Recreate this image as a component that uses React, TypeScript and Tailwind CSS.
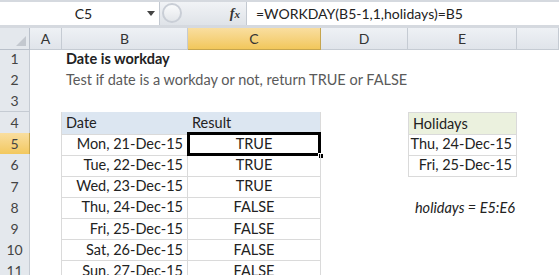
import React from "react";

const FONT = "font-['Lato','Open_Sans',sans-serif]";

// column widths: row header, A, B, C, D, E, F
const COLS = "grid-cols-[30px_32px_126px_133px_87px_109px_1fr]";

type Row = {
  n: number;
  b?: string;
  c?: string;
  e?: string;
};

const rows: Row[] = [
  { n: 1 },
  { n: 2 },
  { n: 3 },
  { n: 4, b: "Date", c: "Result", e: "Holidays" },
  { n: 5, b: "Mon, 21-Dec-15", c: "TRUE", e: "Thu, 24-Dec-15" },
  { n: 6, b: "Tue, 22-Dec-15", c: "TRUE", e: "Fri, 25-Dec-15" },
  { n: 7, b: "Wed, 23-Dec-15", c: "TRUE" },
  { n: 8, b: "Thu, 24-Dec-15", c: "FALSE" },
  { n: 9, b: "Fri, 25-Dec-15", c: "FALSE" },
  { n: 10, b: "Sat, 26-Dec-15", c: "FALSE" },
  { n: 11, b: "Sun, 27-Dec-15", c: "FALSE" },
];

const FormulaBar = () => (
  <div className="h-[28px] bg-[#d5d9df] pt-[2px] pb-[3px] flex">
    <div className="w-[160px] bg-white flex items-center border-r border-[#c3c9d1]">
      <span className="flex-1 text-center text-[14px] text-[#222] pl-[20px]">C5</span>
      <svg width="8" height="5" viewBox="0 0 8 5" className="mr-[4px]">
        <path d="M0 0 L8 0 L4 5 Z" fill="#444" />
      </svg>
    </div>
    <div className="w-[86px] flex items-center bg-gradient-to-b from-[#f1f3f6] to-[#dfe3e8] relative">
      <div className="absolute left-[2px] top-[1px] w-[20px] h-[20px] rounded-full border-2 border-[#c9ced6] bg-gradient-to-b from-[#fafbfc] to-[#e3e6ea]" />
      <span className="ml-auto mr-[6px] font-['Liberation_Serif',serif] italic font-bold text-[14px] text-[#333]">
        f<span className="text-[11px]">x</span>
      </span>
    </div>
    <div className="flex-1 bg-white flex items-center pl-[9px] text-[14px] text-[#222] border-l border-[#c3c9d1]">
      =WORKDAY(B5-1,1,holidays)=B5
    </div>
  </div>
);

const Header = () => (
  <div className={`grid ${COLS} h-[20px] text-[14px] text-[#333]`}>
    <div className="bg-[#e4e8ed] border-r border-b border-[#b9c0ca] relative">
      <svg width="10" height="10" viewBox="0 0 10 10" className="absolute right-[3px] bottom-[3px]">
        <path d="M10 0 L10 10 L0 10 Z" fill="#c3c8cf" />
      </svg>
    </div>
    {["A", "B", "C", "D", "E", ""].map((l) =>
      l === "C" ? (
        <div
          key={l}
          className="flex items-center justify-center bg-gradient-to-b from-[#f9de9f] to-[#f2c75a] border-r border-b border-[#c6a54e]"
        >
          {l}
        </div>
      ) : (
        <div
          key={l || "f"}
          className="flex items-center justify-center bg-gradient-to-b from-[#eef1f5] to-[#e0e4ea] border-r border-b border-[#c5cbd3]"
        >
          {l}
        </div>
      )
    )}
  </div>
);

const SheetRow = ({ r }: { r: Row }) => {
  const isHead = r.n === 4;
  const inTable = r.n >= 4;
  const inHol = r.n >= 4 && r.n <= 6;
  return (
    <div className={`grid ${COLS} h-[21.2px] text-[14.5px] text-[#222]`}>
      <div
        className={`flex items-center justify-center text-[14px] text-[#444] border-r border-b ${
          r.n === 5
            ? "bg-gradient-to-b from-[#f9de9f] to-[#f2c75a] border-[#c6a54e]"
            : "bg-[#e4e8ed] border-[#c5cbd3]"
        }`}
      >
        {r.n}
      </div>
      <div className={inTable ? "border-r border-[#dadada]" : ""} />
      {/* B */}
      <div
        className={`flex items-center pr-[4px] ${
          r.n === 1
            ? "font-bold pl-[4px] whitespace-nowrap overflow-visible"
            : r.n === 2
            ? "pl-[4px] text-[#5a5a5a] whitespace-nowrap overflow-visible"
            : isHead
            ? "bg-[#dce6f1] pl-[4px] border-b border-[#dadada]"
            : inTable
            ? "justify-end border-b border-r border-[#dadada]"
            : ""
        }`}
      >
        {r.n === 1 && "Date is workday"}
        {r.n === 2 && "Test if date is a workday or not, return TRUE or FALSE"}
        {r.n >= 4 && r.b}
      </div>
      {/* C */}
      <div
        className={`flex items-center relative ${
          isHead
            ? "bg-[#dce6f1] pl-[4px] border-b border-r border-[#dadada]"
            : inTable
            ? "justify-center border-b border-r border-[#dadada]"
            : ""
        }`}
      >
        {r.c}
        {r.n === 5 && (
          <>
            <div className="absolute -left-[1px] -top-[1px] -right-[1px] -bottom-[1px] border-[3px] border-black" />
            <div className="absolute -right-[4px] -bottom-[4px] w-[6px] h-[6px] bg-black border border-white" />
          </>
        )}
      </div>
      {/* D */}
      <div />
      {/* E */}
      <div
        className={`flex items-center ${
          r.n === 4
            ? "bg-[#ebf1de] pl-[4px] border border-[#dadada]"
            : inHol
            ? "justify-end pr-[4px] border-x border-b border-[#dadada]"
            : r.n === 8
            ? "justify-end pr-[2px] italic whitespace-nowrap"
            : ""
        }`}
      >
        {r.e}
        {r.n === 8 && "holidays = E5:E6"}
      </div>
      <div />
    </div>
  );
};

export default function App() {
  return (
    <div className={`w-[559px] h-[275px] overflow-hidden bg-white ${FONT}`}>
      <FormulaBar />
      <Header />
      {rows.map((r) => (
        <SheetRow key={r.n} r={r} />
      ))}
    </div>
  );
}
